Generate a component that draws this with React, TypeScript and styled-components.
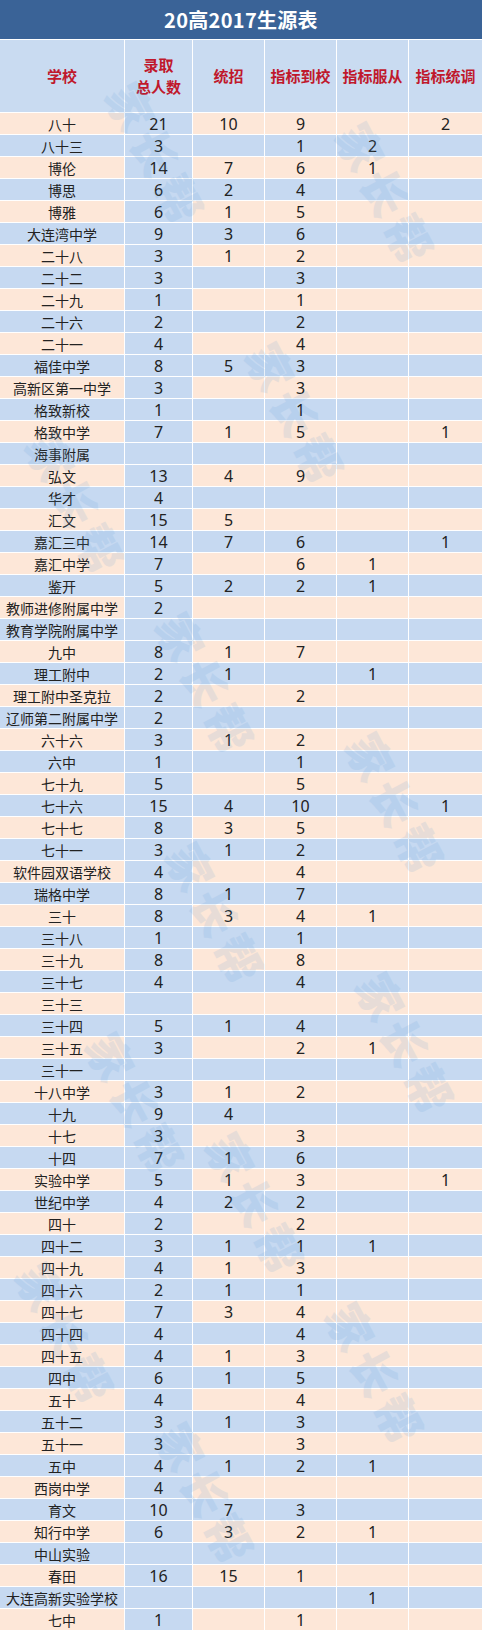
import React from "react";
import styled, { createGlobalStyle } from "styled-components";

const GlobalStyle = createGlobalStyle`
	html, body {
		margin: 0;
		padding: 0;
		background: #ffffff;
	}
	body {
		font-family: "Noto Sans CJK SC", "Noto Sans", sans-serif;
	}
`;

const BLUE = "#c6d9f1";
const PEACH = "#fde7d8";

type Row = [string, string, string, string, string, string];

const rows: Row[] = [
	["八十", "21", "10", "9", "", "2"],
	["八十三", "3", "", "1", "2", ""],
	["博伦", "14", "7", "6", "1", ""],
	["博思", "6", "2", "4", "", ""],
	["博雅", "6", "1", "5", "", ""],
	["大连湾中学", "9", "3", "6", "", ""],
	["二十八", "3", "1", "2", "", ""],
	["二十二", "3", "", "3", "", ""],
	["二十九", "1", "", "1", "", ""],
	["二十六", "2", "", "2", "", ""],
	["二十一", "4", "", "4", "", ""],
	["福佳中学", "8", "5", "3", "", ""],
	["高新区第一中学", "3", "", "3", "", ""],
	["格致新校", "1", "", "1", "", ""],
	["格致中学", "7", "1", "5", "", "1"],
	["海事附属", "", "", "", "", ""],
	["弘文", "13", "4", "9", "", ""],
	["华才", "4", "", "", "", ""],
	["汇文", "15", "5", "", "", ""],
	["嘉汇三中", "14", "7", "6", "", "1"],
	["嘉汇中学", "7", "", "6", "1", ""],
	["鉴开", "5", "2", "2", "1", ""],
	["教师进修附属中学", "2", "", "", "", ""],
	["教育学院附属中学", "", "", "", "", ""],
	["九中", "8", "1", "7", "", ""],
	["理工附中", "2", "1", "", "1", ""],
	["理工附中圣克拉", "2", "", "2", "", ""],
	["辽师第二附属中学", "2", "", "", "", ""],
	["六十六", "3", "1", "2", "", ""],
	["六中", "1", "", "1", "", ""],
	["七十九", "5", "", "5", "", ""],
	["七十六", "15", "4", "10", "", "1"],
	["七十七", "8", "3", "5", "", ""],
	["七十一", "3", "1", "2", "", ""],
	["软件园双语学校", "4", "", "4", "", ""],
	["瑞格中学", "8", "1", "7", "", ""],
	["三十", "8", "3", "4", "1", ""],
	["三十八", "1", "", "1", "", ""],
	["三十九", "8", "", "8", "", ""],
	["三十七", "4", "", "4", "", ""],
	["三十三", "", "", "", "", ""],
	["三十四", "5", "1", "4", "", ""],
	["三十五", "3", "", "2", "1", ""],
	["三十一", "", "", "", "", ""],
	["十八中学", "3", "1", "2", "", ""],
	["十九", "9", "4", "", "", ""],
	["十七", "3", "", "3", "", ""],
	["十四", "7", "1", "6", "", ""],
	["实验中学", "5", "1", "3", "", "1"],
	["世纪中学", "4", "2", "2", "", ""],
	["四十", "2", "", "2", "", ""],
	["四十二", "3", "1", "1", "1", ""],
	["四十九", "4", "1", "3", "", ""],
	["四十六", "2", "1", "1", "", ""],
	["四十七", "7", "3", "4", "", ""],
	["四十四", "4", "", "4", "", ""],
	["四十五", "4", "1", "3", "", ""],
	["四中", "6", "1", "5", "", ""],
	["五十", "4", "", "4", "", ""],
	["五十二", "3", "1", "3", "", ""],
	["五十一", "3", "", "3", "", ""],
	["五中", "4", "1", "2", "1", ""],
	["西岗中学", "4", "", "", "", ""],
	["育文", "10", "7", "3", "", ""],
	["知行中学", "6", "3", "2", "1", ""],
	["中山实验", "", "", "", "", ""],
	["春田", "16", "15", "1", "", ""],
	["大连高新实验学校", "", "", "", "1", ""],
	["七中", "1", "", "1", "", ""],
];

const headers = ["学校", "录取\n总人数", "统招", "指标到校", "指标服从", "指标统调"];

// faint diagonal watermark spots (x, y), kept inside the sheet
const marks: [number, number][] = [
	[150, 70], [380, 110],
	[290, 330], [70, 420],
	[200, 600], [390, 720],
	[210, 830], [400, 960],
	[130, 1020], [250, 1120],
	[60, 1250], [370, 1290],
	[200, 1410],
];

const Sheet = styled.div`
	position: relative;
	width: 482px;
	overflow: hidden;
	background: #ffffff;
`;

const Title = styled.div`
	height: 39px;
	margin-bottom: 1px;
	background: #3a6397;
	color: #ffffff;
	font-weight: 700;
	font-size: 20px;
	display: flex;
	align-items: center;
	justify-content: center;
	letter-spacing: 0.3px;
`;

const Grid = styled.div`
	display: grid;
	grid-template-columns: 124px 67px 71px 71px 71px 1fr;
	gap: 1px;
	background: #ffffff;
`;

const HeadCell = styled.div`
	height: 72px;
	background: #c9dbf1;
	color: #c0182c;
	font-weight: 700;
	font-size: 15px;
	line-height: 22px;
	white-space: pre-line;
	text-align: center;
	display: flex;
	align-items: center;
	justify-content: center;
`;

const Cell = styled.div<{ $bg: string; $name?: boolean }>`
	height: 21px;
	background: ${(p) => p.$bg};
	color: #222222;
	font-family: ${(p) =>
		p.$name ? `"Noto Sans CJK SC", sans-serif` : `"Noto Sans", "Open Sans", sans-serif`};
	font-size: ${(p) => (p.$name ? "14px" : "16px")};
	display: flex;
	align-items: center;
	justify-content: center;
	white-space: nowrap;
	overflow: hidden;
`;

const Watermark = styled.div`
	position: absolute;
	font-family: "Noto Sans CJK SC", sans-serif;
	font-weight: 900;
	font-size: 46px;
	color: #5b9bd5;
	opacity: 0.13;
	transform: rotate(62deg);
	transform-origin: left top;
	white-space: nowrap;
	pointer-events: none;
	letter-spacing: 6px;
`;

export default function App() {
	return (
		<>
			<GlobalStyle />
			<Sheet>
				<Title>20高2017生源表</Title>
				<Grid>
					{headers.map((h) => (
						<HeadCell key={h}>{h}</HeadCell>
					))}
					{rows.map((r, i) => {
						const rowBg = i % 2 === 0 ? PEACH : BLUE;
						return r.map((v, j) => (
							<Cell
								key={`${i}-${j}`}
								$bg={j === 1 ? BLUE : rowBg}
								$name={j === 0}
							>
								{v}
							</Cell>
						));
					})}
				</Grid>
				{marks.map(([x, y], k) => (
					<Watermark key={k} style={{ left: x, top: y }}>
						家长帮
					</Watermark>
				))}
			</Sheet>
		</>
	);
}
